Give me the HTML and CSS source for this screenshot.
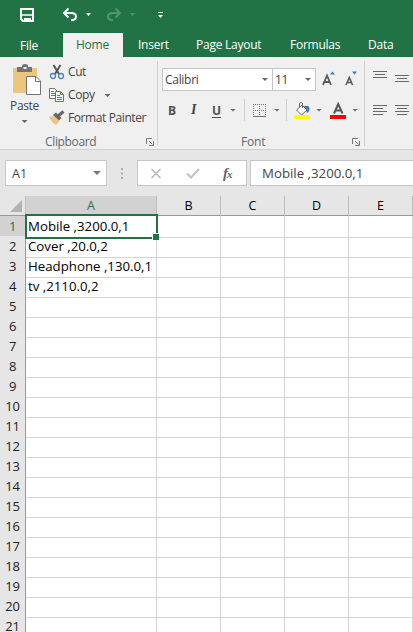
FILE: index.html
```html
<!DOCTYPE html>
<html lang="en">
<head>
<meta charset="utf-8">
<title>Spreadsheet</title>
<link rel="stylesheet" href="styles.css">
</head>
<body>
<div class="app">
  <header class="titlebar">
    <svg class="quick" width="180" height="33" viewBox="0 0 180 33" fill="none">
      <path d="M21 9H33V21H23L21 19Z" stroke="#fff" stroke-width="2"/><path d="M22 15H32" stroke="#fff" stroke-width="1.5"/><path d="M24 18H31V22H28V20H26V22H24Z" fill="#fff"/>
      <path d="M64.500 13H71C75 13 76 15 76 16.500C76 19 74 20.200 71 20.200" stroke="#fff" stroke-width="2"/><path d="M68.500 8.500L64 13L68.500 17.500" stroke="#fff" stroke-width="2"/>
      <path d="M86 13h5l-2.500 3z" fill="#fff"/>
      <g stroke="#539474" stroke-width="2"><path d="M119 13H113C109 13 108 15 108 16.500C108 19 110 20.200 113 20.200"/><path d="M115.500 8.500L120 13L115.500 17.500"/></g>
      <path d="M130 13h5l-2.500 3z" fill="#539474"/>
      <path d="M158 12.500h5" stroke="#fff"/><path d="M158 15h5l-2.500 3z" fill="#fff"/>
    </svg>
  </header>
  <nav class="tabs">
    <span class="tab file">File</span><span class="tab home">Home</span><span class="tab insert">Insert</span><span class="tab layout">Page Layout</span><span class="tab formulas">Formulas</span><span class="tab data">Data</span>
  </nav>
  <section class="ribbon">
    <div class="group clipboard">
      <div class="clip-body">
        <div class="paste">
          <svg width="30" height="32" viewBox="0 0 30 32"><path d="M1 3H25V28H1Z" fill="#ecc57f"/><path d="M5 2H10V1Q10 -1 13 -1T16 1V2H20V7H5Z" fill="#737373"/><path d="M11.500 2h3v2h-3z" fill="#f0f0f0"/><path d="M14.500 11.500H24L28.500 16V29.500H14.500Z" fill="#fff" stroke="#737373"/><path d="M23.500 11.500V16.500H28.500" fill="none" stroke="#737373"/></svg>
          <span class="paste-label">Paste</span>
          <i class="arrow"></i>
        </div>
        <div class="commands">
          <div class="command cut"><svg width="16" height="16" viewBox="0 0 16 16" fill="none"><path d="M4.500 1L10 10M11.500 1L6 10" stroke="#555" stroke-width="2"/><circle cx="4" cy="12" r="2.500" stroke="#4a80b8" stroke-width="1.300"/><circle cx="12" cy="12" r="2.500" stroke="#4a80b8" stroke-width="1.300"/></svg><span>Cut</span></div>
          <div class="command copy"><svg width="16" height="16" viewBox="0 0 16 16"><path d="M.5 1.500H5.500L8.500 4.500V11.500H.5Z" fill="#fff" stroke="#737373"/><path d="M2 4.500h3M2 6.500h4M2 8.500h4" stroke="#4a80b8"/><path d="M6.500 4.500H11.500L14.500 7.500V14.500H6.500Z" fill="#fff" stroke="#737373"/><path d="M11.500 4.500V7.500H14.500" fill="none" stroke="#737373"/><path d="M8 8.500h3M8 10.500h5M8 12.500h5" stroke="#4a80b8"/></svg><span>Copy</span><i class="arrow"></i></div>
          <div class="command painter"><svg width="16" height="16" viewBox="0 0 16 16"><path d="M0 7L5 6L10.500 11L7 15Q3 13 0 7Z" fill="#ecc57f"/><path d="M4 5L7 2.500L12.500 8L10 10.500Z" fill="#686868"/><path d="M9 6L14.500 1.500" stroke="#686868" stroke-width="3"/></svg><span>Format Painter</span></div>
        </div>
      </div>
      <div class="group-label"><span class="clip-name">Clipboard</span><svg class="launcher" width="8" height="8" viewBox="0 0 8 8" fill="none" stroke="#777"><path d="M.5 6V.5H6M3 3L6.500 6.500M7.500 3V7.500H3"/></svg></div>
    </div>
    <div class="group font">
      <div class="font-top">
        <span class="select family"><span>Calibri</span><i class="arrow"></i></span><span class="select size"><span>11</span><i class="arrow"></i></span>
        <svg class="grow" width="38" height="18" viewBox="0 0 38 18"><g fill="none" stroke="#595959" stroke-width="1.800"><path d="M1 15L5 5.500L9 15M2.500 12H7.500"/><path d="M24 15L27.300 7.500L30.500 15M25 12.500H29.500" stroke-width="1.600"/></g><path d="M8 4.500h5l-2.500-3zM30 1.500h5l-2.500 3z" fill="#397bb8"/></svg>
      </div>
      <div class="font-bottom">
        <b class="bold">B</b><i class="italic">I</i><b class="underline">U</b><i class="arrow u-arrow"></i><span class="split first"></span>
        <svg class="borders" width="13" height="13" viewBox="0 0 13 13" fill="none" stroke="#737373"><path d="M0 .5H13M0 6.500H13M.5 0V12M6.500 0V12M12.500 0V12" stroke-dasharray="1 1"/><path d="M0 12.500H13"/></svg><i class="arrow b-arrow"></i><span class="split second"></span>
        <svg class="fill" width="17" height="17" viewBox="0 0 17 17"><path d="M10 4Q15 3 15.500 6T13 11Z" fill="#397bb8"/><path d="M2.500 8L8 3L13 8L7.500 13Z" fill="#fff" stroke="#666"/><path d="M5.500 5V1.500Q7-.5 8.500 1.500V6" fill="none" stroke="#666"/><path d="M0 13H16V17H0Z" fill="#ff0"/></svg><i class="arrow f-arrow"></i>
        <svg class="ink" width="16" height="17" viewBox="0 0 16 17"><path d="M4 11.500L8.200 2L12.500 11.500M5.500 8.500H11" fill="none" stroke="#595959" stroke-width="2"/><path d="M0 13H16V17H0Z" fill="red"/></svg><i class="arrow i-arrow"></i>
      </div>
      <div class="group-label"><span class="font-name">Font</span><svg class="launcher" width="8" height="8" viewBox="0 0 8 8" fill="none" stroke="#777"><path d="M.5 6V.5H6M3 3L6.500 6.500M7.500 3V7.500H3"/></svg></div>
    </div>
    <div class="group align">
      <svg width="40" height="60" viewBox="0 0 40 60" fill="none" stroke="#686868"><path d="M0 1.500h14M2 4.500h10M0 7.500h14M22 5.500h14M24 8.500h10M22 11.500h14M0 35.500h14M0 38.500h10M0 41.500h14M0 44.500h10M22 35.500h14M24 38.500h10M22 41.500h14M24 44.500h10"/></svg>
    </div>
  </section>
  <section class="formula-bar">
    <div class="field name-box"><span>A1</span><svg width="8" height="4" viewBox="0 0 8 4"><path d="M0 0H8L4 4Z" fill="#777"/></svg></div>
    <svg class="dots" width="2" height="11" viewBox="0 0 2 11"><path d="M0 0H2V2H0ZM0 4.500H2V6.500H0ZM0 9H2V11H0Z" fill="#aaa"/></svg>
    <div class="field buttons"><svg width="60" height="16" viewBox="0 0 60 16" fill="none"><path d="M2.500 4L11.500 13M11.500 4L2.500 13" stroke="#bbb" stroke-width="1.700"/><path d="M38 8.500L42 12.500L50 4" stroke="#c4c4c4" stroke-width="2.200"/></svg><span class="fx">f<small>x</small></span></div>
    <div class="field formula"><span>Mobile ,3200.0,1</span></div>
  </section>
  <main class="sheet">
    <div class="row heads"><span class="corner"><svg width="12" height="12" viewBox="0 0 12 12"><path d="M12 0V12H0Z" fill="#b3b3b3"/></svg></span><span class="active">A</span><span>B</span><span>C</span><span>D</span><span>E</span></div>
    <div class="row"><span class="num active">1</span><span class="selected"><em>Mobile ,3200.0,1</em></span><span></span><span></span><span></span><span></span></div>
    <div class="row"><span class="num">2</span><span><em>Cover ,20.0,2</em></span><span></span><span></span><span></span><span></span></div>
    <div class="row"><span class="num">3</span><span><em>Headphone ,130.0,1</em></span><span></span><span></span><span></span><span></span></div>
    <div class="row"><span class="num">4</span><span><em>tv ,2110.0,2</em></span><span></span><span></span><span></span><span></span></div>
    <div class="row"><span class="num">5</span><span></span><span></span><span></span><span></span><span></span></div>
    <div class="row"><span class="num">6</span><span></span><span></span><span></span><span></span><span></span></div>
    <div class="row"><span class="num">7</span><span></span><span></span><span></span><span></span><span></span></div>
    <div class="row"><span class="num">8</span><span></span><span></span><span></span><span></span><span></span></div>
    <div class="row"><span class="num">9</span><span></span><span></span><span></span><span></span><span></span></div>
    <div class="row"><span class="num">10</span><span></span><span></span><span></span><span></span><span></span></div>
    <div class="row"><span class="num">11</span><span></span><span></span><span></span><span></span><span></span></div>
    <div class="row"><span class="num">12</span><span></span><span></span><span></span><span></span><span></span></div>
    <div class="row"><span class="num">13</span><span></span><span></span><span></span><span></span><span></span></div>
    <div class="row"><span class="num">14</span><span></span><span></span><span></span><span></span><span></span></div>
    <div class="row"><span class="num">15</span><span></span><span></span><span></span><span></span><span></span></div>
    <div class="row"><span class="num">16</span><span></span><span></span><span></span><span></span><span></span></div>
    <div class="row"><span class="num">17</span><span></span><span></span><span></span><span></span><span></span></div>
    <div class="row"><span class="num">18</span><span></span><span></span><span></span><span></span><span></span></div>
    <div class="row"><span class="num">19</span><span></span><span></span><span></span><span></span><span></span></div>
    <div class="row"><span class="num">20</span><span></span><span></span><span></span><span></span><span></span></div>
    <div class="row"><span class="num">21</span><span></span><span></span><span></span><span></span><span></span></div>
  </main>
</div>
</body>
</html>
```
FILE: styles.css
```css
* { box-sizing: border-box; }
body { margin: 0; font-family: "Open Sans", "Noto Sans", sans-serif; font-size: 12px; color: #444; }
svg { display: block; flex: none; }
.app { width: 413px; height: 632px; overflow: hidden; background: #fff; }
.titlebar { height: 33px; background: #217346; }
.tabs { height: 24px; display: flex; background: #217346; color: #fff; line-height: 23px; white-space: nowrap; }
.tab { flex: none; letter-spacing: -.25px; }
.file { width: 63px; padding-left: 20px; line-height: 25px; }
.home { width: 60px; padding-left: 13px; background: #f0f0f0; color: #217346; }
.insert { width: 73px; padding-left: 15px; }
.layout { width: 94px; }
.formulas { width: 78px; }
.ribbon { height: 93px; display: flex; background: #f0f0f0; border-bottom: 1px solid #cfcfcf; padding: 4px 0 3px; }
.group { border-right: 1px solid #d0d0d0; flex: none; white-space: nowrap; }
.arrow { display: block; flex: none; width: 6px; height: 3px; background: #666; clip-path: polygon(0 0, 100% 0, 50% 100%); }
.clipboard { width: 158px; }
.clip-body { display: flex; height: 71px; }
.paste { width: 49px; display: flex; flex-direction: column; align-items: center; padding-top: 4px; }
.paste svg { margin-left: 5px; overflow: visible; }
.paste-label { line-height: 16px; margin-top: 1px; letter-spacing: -.35px; }
.paste .arrow { margin-top: 6px; }
.command { display: flex; height: 23px; align-items: center; gap: 3px; }
.command span { letter-spacing: -.4px; line-height: 16px; margin-top: -1px; }
.command svg { margin-top: -1px; }
.copy .arrow { margin-left: 7px; }
.group-label { height: 18px; display: flex; align-items: center; color: #666; letter-spacing: -.2px; }
.clip-name { width: 101px; margin-left: 45px; letter-spacing: -.35px; }
.launcher { margin-top: 2px; }
.font { width: 207px; }
.font-top { display: flex; height: 34px; padding: 7px 0 0 4px; }
.select { display: flex; align-items: center; justify-content: space-between; height: 23px; background: #fff; border: 1px solid #c6c6c6; padding: 0 4px 0 2px; letter-spacing: -.3px; }
.family { width: 111px; }
.size { width: 43px; border-left: 0; }
.grow { margin: 2px 0 0 6px; }
.font-bottom { display: flex; align-items: center; height: 30px; margin-bottom: 7px; padding-left: 10px; }
.bold, .underline { font-size: 12px; width: 22px; color: #505050; }
.italic { font-family: "Liberation Serif", serif; font-weight: bold; font-size: 14px; width: 22px; padding-left: 1px; }
.underline { width: 19px; text-decoration: underline; text-underline-offset: 2px; }
.split { width: 1px; height: 22px; background: #d0d0d0; }
.u-arrow { margin-left: -1px; }
.first { margin: 0 8px; }
.b-arrow { margin-left: 8px; }
.second { margin: 0 7px 0 6px; }
.f-arrow { margin: 0 8px 0 5px; }
.i-arrow { margin-left: 6px; }
.font-name { margin-left: 83px; width: 111px; }
.align { border: 0; padding: 9px 0 0 8px; width: 48px; }
.formula-bar { display: flex; height: 46px; background: #e6e6e6; padding: 10px 0 10px 5px; }
.field { height: 26px; background: #fff; border: 1px solid #c6c6c6; display: flex; align-items: center; flex: none; }
.name-box { width: 102px; justify-content: space-between; padding: 0 5px 0 6px; font-size: 12.500px; }
.dots { margin: 8px 14px 0; }
.buttons { width: 110px; padding-left: 11px; }
.fx { font: italic bold 15px "Liberation Serif", serif; margin-left: 14px; color: #666; letter-spacing: -1px; }
.fx small { font-size: 11px; }
.formula { width: 170px; margin-left: 3px; padding-left: 11px; font-size: 13.250px; }
.row { display: grid; grid-template-columns: 26px 131px 64px 64px 64px 64px; height: 20px; color: #000; }
.row > span { border-right: 1px solid #d4d4d4; border-bottom: 1px solid #d4d4d4; line-height: 20px; min-width: 0; }
.row em { display: block; font-style: normal; font-size: 13.250px; padding-left: 2px; white-space: nowrap; }
.row .num { background: #e6e6e6; border-right-color: #999; border-bottom-color: #c0c0c0; text-align: center; font-size: 13px; letter-spacing: -.3px; line-height: 21px; color: #222; }
.row.heads > span { background: #e6e6e6; border-right-color: #bdbdbd; border-bottom-color: #999; text-align: center; font-size: 12.500px; line-height: 19px; }
.row .corner svg { margin: 4px 0 0 10px; }
.row.heads > .active, .row .num.active { background: #d2d2d2; color: #217346; }
.row.heads > .active { border-bottom-color: #217346; }
.row .selected { position: relative; }
.selected::before { content: ""; position: absolute; inset: -2px -2px -2px -1px; border: 2px solid #217346; }
.selected::after { content: ""; position: absolute; right: -3px; bottom: -3px; width: 6px; height: 6px; background: #217346; border: solid #fff; border-width: 1px 0 0 1px; }
```
